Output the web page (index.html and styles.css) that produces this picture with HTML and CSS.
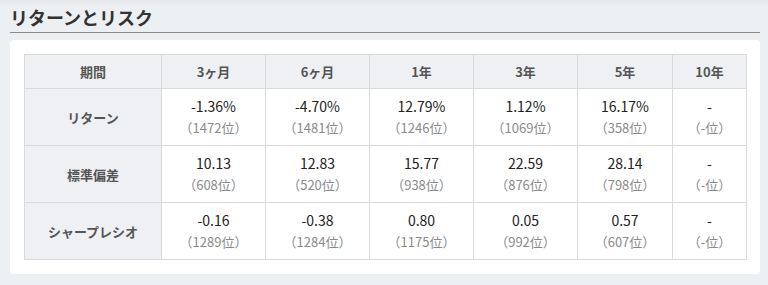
FILE: index.html
```html
<!DOCTYPE html>
<html lang="ja">
<head>
<meta charset="utf-8">
<link rel="stylesheet" href="styles.css">
</head>
<body>
<div class="page">
  <h2 class="title">リターンとリスク</h2>
  <div class="card">
    <table class="rr">
      <colgroup>
        <col class="c0"><col class="c1"><col class="c1"><col class="c1"><col class="c1"><col class="c5"><col class="c6">
      </colgroup>
      <thead>
        <tr><th>期間</th><th>3ヶ月</th><th>6ヶ月</th><th>1年</th><th>3年</th><th>5年</th><th>10年</th></tr>
      </thead>
      <tbody>
        <tr>
          <th>リターン</th>
          <td><div class="v">-1.36%</div><div class="r">（1472位）</div></td>
          <td><div class="v">-4.70%</div><div class="r">（1481位）</div></td>
          <td><div class="v">12.79%</div><div class="r">（1246位）</div></td>
          <td><div class="v">1.12%</div><div class="r">（1069位）</div></td>
          <td><div class="v">16.17%</div><div class="r">（358位）</div></td>
          <td><div class="v">-</div><div class="r">（-位）</div></td>
        </tr>
        <tr>
          <th>標準偏差</th>
          <td><div class="v">10.13</div><div class="r">（608位）</div></td>
          <td><div class="v">12.83</div><div class="r">（520位）</div></td>
          <td><div class="v">15.77</div><div class="r">（938位）</div></td>
          <td><div class="v">22.59</div><div class="r">（876位）</div></td>
          <td><div class="v">28.14</div><div class="r">（798位）</div></td>
          <td><div class="v">-</div><div class="r">（-位）</div></td>
        </tr>
        <tr>
          <th>シャープレシオ</th>
          <td><div class="v">-0.16</div><div class="r">（1289位）</div></td>
          <td><div class="v">-0.38</div><div class="r">（1284位）</div></td>
          <td><div class="v">0.80</div><div class="r">（1175位）</div></td>
          <td><div class="v">0.05</div><div class="r">（992位）</div></td>
          <td><div class="v">0.57</div><div class="r">（607位）</div></td>
          <td><div class="v">-</div><div class="r">（-位）</div></td>
        </tr>
      </tbody>
    </table>
  </div>
</div>
</body>
</html>
```
FILE: styles.css
```css
html, body {
  margin: 0;
  padding: 0;
}
body {
  background: linear-gradient(to bottom, #e4e7eb 0px, #edf0f3 7px, #edf0f3 100%);
  font-family: "Noto Sans CJK JP", "Noto Sans", sans-serif;
  color: #222;
  min-height: 285px;
}
.page {
  padding: 0 8px 0 10px;
}
.title {
  margin: 0;
  padding: 4px 0 2px 0;
  font-size: 18px;
  line-height: 26px;
  font-weight: bold;
  color: #333;
  border-bottom: 1px solid #8a8a8a;
}
.card {
  margin-top: 7px;
  background: #fff;
  border-radius: 4px;
  padding: 14px;
}
.rr {
  border-collapse: collapse;
  table-layout: fixed;
  width: 722px;
}
.c0 { width: 137px; }
.c1 { width: 104px; }
.c5 { width: 95px; }
.c6 { width: 74px; }
.rr th, .rr td {
  border: 1px solid #dadada;
  text-align: center;
  padding: 0;
}
.rr thead th {
  background: #eef0f4;
  height: 33px;
  font-size: 13px;
  font-weight: bold;
  color: #555;
}
.rr tbody th {
  background: #eef0f4;
  font-size: 13px;
  font-weight: bold;
  color: #555;
}
.rr tbody td {
  height: 56px;
}
.v {
  font-size: 14px;
  line-height: 19px;
  color: #222;
}
.r {
  font-size: 13px;
  line-height: 19px;
  color: #8a8a8a;
  margin-top: 2px;
}
```
